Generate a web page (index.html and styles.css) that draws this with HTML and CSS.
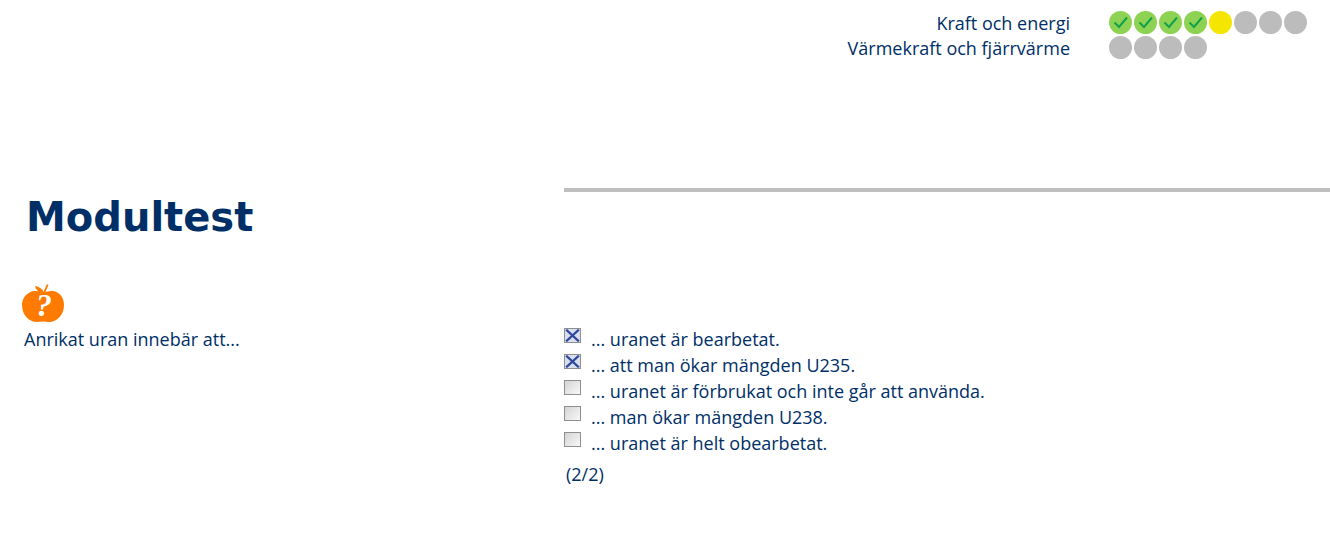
FILE: index.html
```html
<!DOCTYPE html>
<html lang="sv">
<head>
    <meta charset="UTF-8">
    <title>Modultest</title>
    <link rel="stylesheet" href="styles.css">
</head>
<body>
    <div class="status">
        <div class="status-rad">
            <span class="status-namn">Kraft och energi</span>
            <div class="prickar">
                <span class="prick klar"><svg viewBox="0 0 23 23"><path d="M5.5 11.5 L10 16 L18 6.5"/></svg></span>
                <span class="prick klar"><svg viewBox="0 0 23 23"><path d="M5.5 11.5 L10 16 L18 6.5"/></svg></span>
                <span class="prick klar"><svg viewBox="0 0 23 23"><path d="M5.5 11.5 L10 16 L18 6.5"/></svg></span>
                <span class="prick klar"><svg viewBox="0 0 23 23"><path d="M5.5 11.5 L10 16 L18 6.5"/></svg></span>
                <span class="prick aktiv"></span>
                <span class="prick"></span>
                <span class="prick"></span>
                <span class="prick"></span>
            </div>
        </div>
        <div class="status-rad">
            <span class="status-namn">Värmekraft och fjärrvärme</span>
            <div class="prickar">
                <span class="prick"></span>
                <span class="prick"></span>
                <span class="prick"></span>
                <span class="prick"></span>
            </div>
        </div>
    </div>

    <hr class="linje">

    <h1>Modultest</h1>

    <div class="fraga">
        <div class="fraga-text">
            <svg class="apple" viewBox="0 0 44 38">
                <path class="apple-kropp" d="M13 7 C17 6.5 20 8 22 9 C24 8 28 6.5 32 7 C39 8 43 14 43 21 C43 31 36 38 28 38 C26 38 24 37.5 22 37.5 C20 37.5 18 38 16 38 C8 38 1 31 1 21 C1 14 6 8 13 7 Z"/>
                <path class="apple-kropp" d="M14 2 C18 2.5 22 5 23 9 C19 9.5 15 6.5 14 2 Z"/>
                <path class="apple-kropp" d="M22 9 L26 0 L27.5 1 L24 9 Z"/>
                <text class="apple-tecken" x="23" y="32">?</text>
            </svg>
            <p>Anrikat uran innebär att...</p>
        </div>
        <div class="svar">
            <label class="alt"><span class="ruta vald"><svg viewBox="0 0 13 11"><path d="M1 0.5 L12 10.5 M12 0.5 L1 10.5"/></svg></span>... uranet är bearbetat.</label>
            <label class="alt"><span class="ruta vald"><svg viewBox="0 0 13 11"><path d="M1 0.5 L12 10.5 M12 0.5 L1 10.5"/></svg></span>... att man ökar mängden U235.</label>
            <label class="alt"><span class="ruta"></span>... uranet är förbrukat och inte går att använda.</label>
            <label class="alt"><span class="ruta"></span>... man ökar mängden U238.</label>
            <label class="alt"><span class="ruta"></span>... uranet är helt obearbetat.</label>
            <p class="antal">(2/2)</p>
        </div>
    </div>
</body>
</html>
```

FILE: styles.css
```css
body {
    font-family: 'Open Sans', sans-serif;
    font-size: 18px;
    color: #002f67;
    background: white;
    margin: 0;
}

.status {
    padding-top: 11px;
    padding-left: 700px;
}

.status-rad {
    display: grid;
    grid-template-columns: 370px 1fr;
    column-gap: 39px;
    height: 25px;
    line-height: 25px;
}

.status-namn {
    text-align: right;
}

.prickar {
    display: flex;
    gap: 2px;
}

.prick {
    display: block;
    width: 23px;
    height: 23px;
    border-radius: 50%;
    background: #bcbcbc;
}

.prick svg {
    display: block;
    width: 23px;
    height: 23px;
}

.prick path {
    fill: none;
    stroke: #12a14b;
    stroke-width: 2;
}

.klar {
    background: #8ed254;
}

.aktiv {
    background: #f5e600;
}

.linje {
    height: 4px;
    margin: 127px 0 0 564px;
    border: none;
    background: #bfbfbf;
}

h1 {
    font-family: 'DejaVu Sans', sans-serif;
    font-size: 40px;
    line-height: 48px;
    font-weight: bold;
    color: #002f67;
    margin: 1px 0 0 26px;
}

.fraga {
    display: grid;
    grid-template-columns: 564px 1fr;
    margin-top: 43px;
}

.fraga-text {
    padding-left: 21px;
}

.apple {
    display: block;
    width: 44px;
    height: 38px;
    overflow: visible;
}

.apple-kropp {
    fill: #ff7a00;
}

.apple-tecken {
    font-family: 'Liberation Serif', serif;
    font-size: 32px;
    font-weight: bold;
    font-style: italic;
    fill: white;
    text-anchor: middle;
}

.fraga-text p {
    margin: 4px 0 0 3px;
    line-height: 26px;
}

.svar {
    padding-top: 42px;
}

.alt {
    display: flex;
    height: 26px;
    line-height: 26px;
}

.ruta {
    display: block;
    box-sizing: border-box;
    width: 17px;
    height: 15px;
    margin: 2px 10px 0 0;
    border: 1px solid #8f8f8f;
    background: linear-gradient(135deg, #d4d4d4, #f8f8f8);
}

.ruta svg {
    display: block;
    width: 15px;
    height: 13px;
}

.ruta path {
    fill: none;
    stroke: #2d4a9a;
    stroke-width: 2;
}

.vald {
    background: #d9deee;
}

.antal {
    margin: 5px 0 0 2px;
    line-height: 26px;
}
```
